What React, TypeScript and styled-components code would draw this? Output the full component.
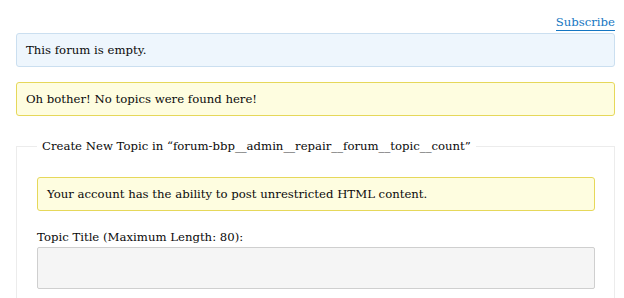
import styled, { createGlobalStyle } from "styled-components";

const GlobalStyle = createGlobalStyle`
  body {
    margin: 0;
    background: #ffffff;
    font-family: "DejaVu Serif", "Liberation Serif", serif;
    color: #0a0a0a;
  }
`;

const Page = styled.div`
  padding: 15px 9px 0 16px;
  display: flex;
  flex-direction: column;
`;

const SubscribeRow = styled.div`
  display: flex;
  justify-content: flex-end;
  height: 18px;
`;

const SubscribeLink = styled.a`
  font-size: 11.7px;
  line-height: 15px;
  color: #1576c2;
  text-decoration: none;
  border-bottom: 1.5px solid #1576c2;
  height: 15px;
  cursor: pointer;
`;

const Notice = styled.div<{ $tone: "info" | "warn" }>`
  box-sizing: border-box;
  height: 34px;
  padding: 0 9px;
  display: flex;
  align-items: center;
  font-size: 11.7px;
  border-radius: 3px;
  border: 1px solid ${(p) => (p.$tone === "info" ? "#cbdff0" : "#e6d85a")};
  background: ${(p) => (p.$tone === "info" ? "#eef6fd" : "#fefde0")};
  margin-bottom: ${(p) => (p.$tone === "info" ? "15px" : "0")};
`;

const Fieldset = styled.fieldset`
  margin: 23px 0 0;
  padding: 24px 19px 20px 20px;
  border: 1px solid #ececec;
  border-bottom: none;
  min-width: 0;
`;

const Legend = styled.legend`
  font-size: 11.7px;
  padding: 0 5px;
  margin-left: 0;
`;

const Label = styled.label`
  display: block;
  font-size: 11.7px;
  margin: 19px 0 3px;
`;

const TitleInput = styled.input`
  box-sizing: border-box;
  display: block;
  width: 100%;
  height: 42px;
  background: #f5f5f5;
  border: 1px solid #cfcfcf;
  border-radius: 2px;
  outline: none;
`;

const App = () => {
  return (
    <Page>
      <GlobalStyle />
      <SubscribeRow>
        <SubscribeLink>Subscribe</SubscribeLink>
      </SubscribeRow>
      <Notice $tone="info">This forum is empty.</Notice>
      <Notice $tone="warn">Oh bother! No topics were found here!</Notice>
      <Fieldset>
        <Legend>Create New Topic in “forum-bbp__admin__repair__forum__topic__count”</Legend>
        <Notice $tone="warn">Your account has the ability to post unrestricted HTML content.</Notice>
        <Label>Topic Title (Maximum Length: 80):</Label>
        <TitleInput type="text" />
      </Fieldset>
    </Page>
  );
};

export default App;
